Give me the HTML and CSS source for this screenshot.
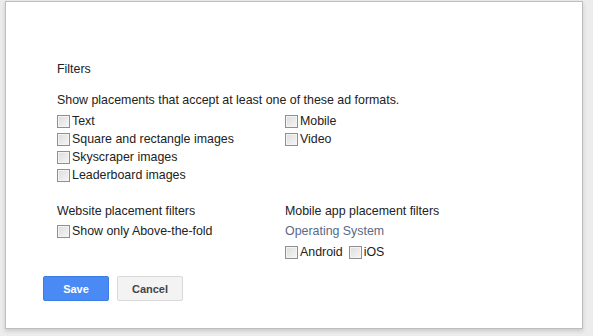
FILE: index.html
```html
<!DOCTYPE html>
<html lang="en">
  <head>
    <meta charset="UTF-8" />
    <title>Filters</title>
    <link rel="stylesheet" href="styles.css">
  </head>
  <body>
    <div class="backdrop">
      <div class="dialog">
        <div class="title">Filters</div>
        <div class="intro">Show placements that accept at least one of these ad formats.</div>

        <div class="formats">
          <div class="col">
            <label class="check"><input type="checkbox" />Text</label>
            <label class="check"><input type="checkbox" />Square and rectangle images</label>
            <label class="check"><input type="checkbox" />Skyscraper images</label>
            <label class="check"><input type="checkbox" />Leaderboard images</label>
          </div>
          <div class="col">
            <label class="check"><input type="checkbox" />Mobile</label>
            <label class="check"><input type="checkbox" />Video</label>
          </div>
        </div>

        <div class="groups">
          <div class="col">
            <div class="group-title">Website placement filters</div>
            <label class="check"><input type="checkbox" />Show only Above-the-fold</label>
          </div>
          <div class="col">
            <div class="group-title">Mobile app placement filters</div>
            <div class="sub-title">Operating System</div>
            <div class="inline">
              <label class="check"><input type="checkbox" />Android</label>
              <label class="check"><input type="checkbox" />iOS</label>
            </div>
          </div>
        </div>

        <div class="actions">
          <button class="btn primary">Save</button>
          <button class="btn">Cancel</button>
        </div>
      </div>
    </div>
  </body>
</html>
```

FILE: styles.css
```css
body {
  margin: 0;
  background: #ececec;
  font-family: "Liberation Sans", Arial, sans-serif;
  font-size: 12.4px;
  color: #222;
}
.backdrop {
  padding: 1px 10px 7px 5px;
}
.dialog {
  box-sizing: border-box;
  width: 578px;
  height: 328px;
  background: #fff;
  border: 1px solid #bdbdbd;
  box-shadow: 0 2px 4px rgba(0, 0, 0, 0.15);
  padding: 59px 0 0 37px;
}
.title {
  line-height: 16px;
  padding-left: 14px;
}
.intro {
  line-height: 16px;
  margin-top: 15px;
  padding-left: 14px;
}
.formats,
.groups {
  display: grid;
  grid-template-columns: 228px 1fr;
  padding-left: 14px;
}
.formats {
  margin-top: 4px;
}
.groups {
  margin-top: 17px;
}
.col {
  display: flex;
  flex-direction: column;
  align-items: flex-start;
}
.check {
  display: flex;
  align-items: center;
  height: 18px;
  line-height: 18px;
}
.check input {
  appearance: none;
  -webkit-appearance: none;
  width: 13px;
  height: 13px;
  margin: 0 2px 0 0;
  border: 1px solid #8f8f8f;
  background: linear-gradient(135deg, #dcdcdc, #f6f6f6);
  box-shadow: inset 0 0 0 1px #f4f4f4;
}
.group-title {
  line-height: 20px;
}
.sub-title {
  line-height: 20px;
  color: #5b6a86;
}
.inline {
  display: flex;
  gap: 6px;
  margin-top: 2px;
}
.groups .col > .check {
  margin-top: 1px;
}
.actions {
  display: flex;
  gap: 8px;
  margin-top: 15px;
}
.btn {
  width: 66px;
  height: 25px;
  border: 1px solid #d9d9d9;
  border-radius: 2px;
  background: #f3f3f3;
  color: #444;
  font-family: "Liberation Sans", Arial, sans-serif;
  font-size: 11px;
  font-weight: bold;
  padding: 0;
}
.primary {
  background: #4a8af4;
  border-color: #3b7de8;
  color: #fff;
}
```
